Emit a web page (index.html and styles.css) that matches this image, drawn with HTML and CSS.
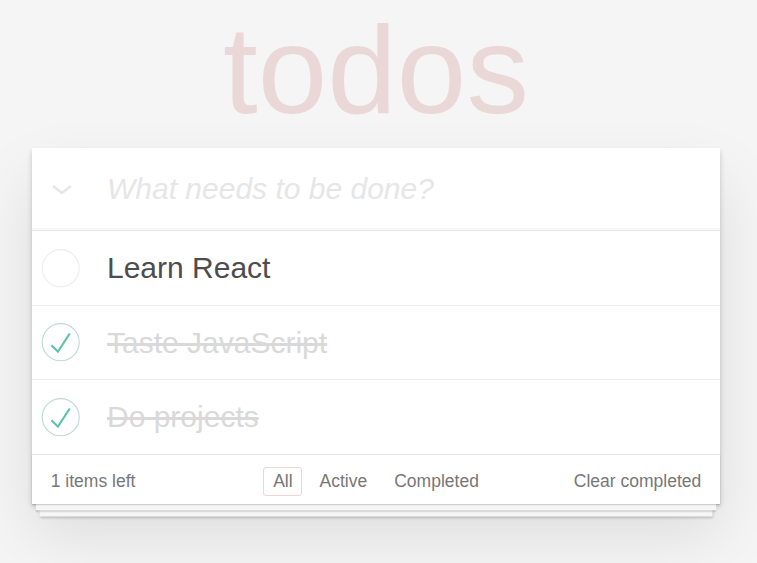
FILE: index.html
```html
<!DOCTYPE html>
<html lang="en">
<head>
<meta charset="utf-8">
<title>todos</title>
<link rel="stylesheet" href="styles.css">
</head>
<body>
<div class="page">
  <h1 class="title">todos</h1>
  <section class="todoapp">
    <header class="header">
      <label class="toggle-all">
        <svg width="22" height="11" viewBox="0 0 22 11"><polyline points="2,2 11,9 20,2" fill="none" stroke="#e6e6e6" stroke-width="2.5"/></svg>
      </label>
      <input class="new-todo" placeholder="What needs to be done?">
    </header>
    <ul class="todo-list">
      <li class="todo">
        <svg class="toggle" width="50" height="50" viewBox="-10 -18 100 135"><circle cx="50" cy="50" r="50" fill="none" stroke="#ededed" stroke-width="3"/></svg>
        <label class="label">Learn React</label>
      </li>
      <li class="todo completed">
        <svg class="toggle" width="50" height="50" viewBox="-10 -18 100 135"><circle cx="50" cy="50" r="50" fill="none" stroke="#bddad5" stroke-width="3"/><path fill="#5dc2af" d="M72 25L42 71 27 56l-4 4 20 20 34-52z"/></svg>
        <label class="label">Taste JavaScript</label>
      </li>
      <li class="todo completed">
        <svg class="toggle" width="50" height="50" viewBox="-10 -18 100 135"><circle cx="50" cy="50" r="50" fill="none" stroke="#bddad5" stroke-width="3"/><path fill="#5dc2af" d="M72 25L42 71 27 56l-4 4 20 20 34-52z"/></svg>
        <label class="label">Do projects</label>
      </li>
    </ul>
    <footer class="footer">
      <span class="todo-count">1 items left</span>
      <ul class="filters">
        <li><a class="filter selected">All</a></li>
        <li><a class="filter">Active</a></li>
        <li><a class="filter">Completed</a></li>
      </ul>
      <button class="clear-completed">Clear completed</button>
    </footer>
  </section>
</div>
</body>
</html>
```

FILE: styles.css
```css
html, body {
  margin: 0;
  padding: 0;
}
html {
  height: 100%;
}
body {
  min-height: 100%;
  background: #f5f5f5;
  font-family: "Liberation Sans", Arial, sans-serif;
  font-size: 17.5px;
  color: #4d4d4d;
}
.page {
  width: 688px;
  margin-left: 32px;
  padding-bottom: 50px;
}
.title {
  margin: 0 0 8px 0;
  font-size: 125px;
  line-height: 140px;
  font-weight: 400;
  text-align: center;
  color: rgba(175, 47, 47, 0.15);
}
.todoapp {
  position: relative;
  background: #fff;
  box-shadow: 0 2.5px 5px 0 rgba(0, 0, 0, 0.2), 0 31px 62px 0 rgba(0, 0, 0, 0.1);
}
.header {
  display: flex;
  align-items: center;
  box-shadow: inset 0 -2px 1px rgba(0, 0, 0, 0.03);
}
.toggle-all {
  width: 75px;
  flex: none;
  display: flex;
  align-items: center;
}
.toggle-all svg {
  margin-left: 19px;
  display: block;
}
.new-todo {
  flex: 1;
  min-width: 0;
  border: none;
  outline: none;
  background: transparent;
  padding: 20px 20px 20px 0;
  font-family: inherit;
  font-size: 30px;
  line-height: 42px;
  font-style: italic;
  color: #4d4d4d;
}
.new-todo::placeholder {
  font-style: italic;
  color: #e6e6e6;
}
.todo-list {
  list-style: none;
  margin: 0;
  padding: 0;
  border-top: 1px solid #e6e6e6;
}
.todo {
  display: flex;
  align-items: center;
  border-bottom: 1px solid #ededed;
  font-size: 30px;
}
.todo:last-child {
  border-bottom: none;
}
.toggle {
  flex: none;
  display: block;
}
.label {
  flex: 1;
  padding: 19px 19px 18.5px 25px;
  line-height: 36px;
  color: #4d4d4d;
}
.completed .label {
  color: #d9d9d9;
  text-decoration: line-through;
}
.footer {
  position: relative;
  display: grid;
  grid-template-columns: 1fr auto 1fr;
  align-items: center;
  padding: 12px 18.75px;
  height: 25px;
  border-top: 1px solid #e6e6e6;
  color: #777;
}
.footer::before {
  content: "";
  position: absolute;
  right: 0;
  bottom: 0;
  left: 0;
  height: 50px;
  overflow: hidden;
  pointer-events: none;
  box-shadow: 0 1.25px 1.25px rgba(0, 0, 0, 0.2),
    0 10px 0 -3.75px #f6f6f6,
    0 11.25px 1.25px -3.75px rgba(0, 0, 0, 0.2),
    0 20px 0 -7.5px #f6f6f6,
    0 21.25px 2.5px -7.5px rgba(0, 0, 0, 0.2);
}
.todo-count {
  justify-self: start;
  line-height: 25px;
}
.filters {
  display: flex;
  list-style: none;
  margin: 0;
  padding: 0;
}
.filter {
  display: block;
  margin: 0 3.75px;
  padding: 3.75px 8.75px;
  border: 1px solid transparent;
  border-radius: 3px;
  color: inherit;
  line-height: 20px;
}
.filter.selected {
  border-color: rgba(175, 47, 47, 0.2);
}
.clear-completed {
  justify-self: end;
  border: none;
  background: none;
  padding: 0;
  margin: 0;
  font-family: inherit;
  font-size: 17.5px;
  line-height: 25px;
  color: #777;
}
```
